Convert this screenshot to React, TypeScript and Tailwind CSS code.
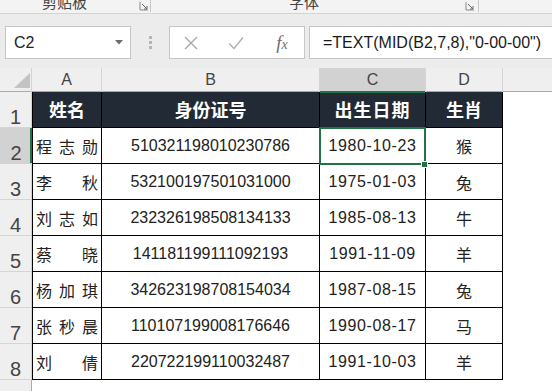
import React from "react";

const rows = [
  ["程志勋", "510321198010230786", "1980-10-23", "猴"],
  ["李秋", "532100197501031000", "1975-01-03", "兔"],
  ["刘志如", "232326198508134133", "1985-08-13", "牛"],
  ["蔡晓", "141181199111092193", "1991-11-09", "羊"],
  ["杨加琪", "342623198708154034", "1987-08-15", "兔"],
  ["张秒晨", "110107199008176646", "1990-08-17", "马"],
  ["刘倩", "220722199110032487", "1991-10-03", "羊"],
];

const cols = "grid grid-cols-[32px_70px_218px_106px_77px_1fr]";

function Launcher() {
  return (
    <svg width="10" height="10" viewBox="0 0 10 10" className="block">
      <path d="M1 1 V9 H9" fill="none" stroke="#8a8a8a" strokeWidth="1" />
      <path d="M3 3 L8 8 M8 5 V8 H5" fill="none" stroke="#6a6a6a" strokeWidth="1" />
    </svg>
  );
}

export default function App() {
  return (
    <div className="w-[552px] h-[391px] overflow-hidden bg-white font-['Liberation_Sans','Noto_Sans_CJK_SC',sans-serif] text-[#222]">
      {/* ribbon bottom strip */}
      <div className="h-[14px] bg-[#f3f3f3] border-b border-[#d4d4d4] relative overflow-hidden">
        <span className="absolute left-[42px] top-[-6px] text-[15px] leading-none text-[#444] font-['Noto_Sans_CJK_SC',sans-serif]">剪贴板</span>
        <div className="absolute left-[139px] top-[1px]"><Launcher /></div>
        <div className="absolute left-[150px] top-0 h-[12px] w-px bg-[#c8c8c8]" />
        <span className="absolute left-[289px] top-[-6px] text-[15px] leading-none text-[#444] font-['Noto_Sans_CJK_SC',sans-serif]">字体</span>
        <div className="absolute left-[465px] top-[1px]"><Launcher /></div>
        <div className="absolute left-[478px] top-0 h-[12px] w-px bg-[#c8c8c8]" />
      </div>

      {/* formula bar */}
      <div className="h-[54px] bg-[#ececec] flex items-start pt-[12px] pl-[5px]">
        <div className="w-[126px] h-[33px] bg-white border border-[#c6c6c6] flex items-center pl-[8px] pr-[7px] justify-between">
          <span className="text-[16px] text-[#222]">C2</span>
          <svg width="8" height="5" viewBox="0 0 8 5"><path d="M0 0 H8 L4 4.5 Z" fill="#6b6b6b" /></svg>
        </div>
        <div className="w-[38px] h-[33px] flex flex-col items-center justify-center gap-[2px]">
          <div className="w-[3px] h-[3px] bg-[#b5b5b5]" />
          <div className="w-[3px] h-[3px] bg-[#b5b5b5]" />
          <div className="w-[3px] h-[3px] bg-[#b5b5b5]" />
        </div>
        <div className="w-[136px] h-[33px] bg-white border border-[#c6c6c6] flex items-center">
          <div className="w-[42px] flex justify-center">
            <svg width="14" height="14" viewBox="0 0 14 14"><path d="M1 1 L13 13 M13 1 L1 13" stroke="#a8a8a8" strokeWidth="1.4" /></svg>
          </div>
          <div className="w-[48px] flex justify-center">
            <svg width="16" height="14" viewBox="0 0 16 14"><path d="M1 7.5 L6 12.5 L15 1.5" fill="none" stroke="#b0b0b0" strokeWidth="1.5" /></svg>
          </div>
          <div className="w-[44px] flex justify-center">
            <span className="font-['Liberation_Serif',serif] italic text-[#707070] text-[19px] leading-none">f<span className="text-[14px]">x</span></span>
          </div>
        </div>
        <div className="ml-[4px] flex-1 mr-[-3px] h-[33px] bg-white border border-[#c6c6c6] flex items-center pl-[13px]">
          <span className="text-[16px] text-[#1a1a1a] whitespace-nowrap">=TEXT(MID(B2,7,8),"0-00-00")</span>
        </div>
      </div>

      {/* column headers */}
      <div className={`${cols} h-[24px] bg-[#efefef] border-b border-[#ababab] text-[16px] text-[#444]`}>
        <div className="border-r border-[#d4d4d4] relative">
          <svg width="16" height="15" viewBox="0 0 16 15" className="absolute left-[14px] top-[5px]"><path d="M16 0 V15 H0 Z" fill="#c3c3c3" /></svg>
        </div>
        <div className="border-r border-[#d4d4d4] flex items-center justify-center">A</div>
        <div className="border-r border-[#d4d4d4] flex items-center justify-center">B</div>
        <div className="border-r border-[#d4d4d4] bg-[#d2d2d2] flex items-center justify-center relative">
          C
          <div className="absolute left-0 right-0 bottom-[-1px] h-[2px] bg-[#217346]" />
        </div>
        <div className="border-r border-[#d4d4d4] flex items-center justify-center">D</div>
        <div />
      </div>

      {/* row 1 */}
      <div className={`${cols} h-[36px]`}>
        <RowHead n={1} />
        <div className="bg-[#222b35] border-l border-r border-b border-black flex items-center justify-center text-white text-[18px] font-bold font-['Noto_Sans_CJK_SC',sans-serif]">姓名</div>
        <div className="bg-[#222b35] border-r border-b border-black flex items-center justify-center text-white text-[18px] font-bold font-['Noto_Sans_CJK_SC',sans-serif]">身份证号</div>
        <div className="bg-[#222b35] border-r border-b border-black flex items-center justify-center text-white text-[18px] font-bold font-['Noto_Sans_CJK_SC',sans-serif] tracking-[1px]">出生日期</div>
        <div className="bg-[#222b35] border-r border-b border-black flex items-center justify-center text-white text-[18px] font-bold font-['Noto_Sans_CJK_SC',sans-serif]">生肖</div>
        <div />
      </div>

      {rows.map((r, i) => {
        const sel = i === 0;
        const name = r[0].split("");
        return (
          <div key={i} className={`${cols} h-[36px]`}>
            <RowHead n={i + 2} selected={sel} />
            <div className="border-l border-r border-b border-black flex items-center justify-between px-[3px] text-[16px] font-['Noto_Sans_CJK_SC',sans-serif]">
              {name.map((c, j) => (
                <span key={j}>{c}</span>
              ))}
            </div>
            <div className="border-r border-b border-black flex items-center justify-center text-[16px]">{r[1]}</div>
            <div className="border-r border-b border-black flex items-center justify-center text-[16px] tracking-[0.6px] relative">
              {r[2]}
              {sel && (
                <>
                  <div className="absolute left-[-1px] top-[-1px] w-[107px] h-[38px] border-2 border-[#217346] z-10" />
                  <div className="absolute left-[102px] top-[34px] w-[5px] h-[5px] bg-[#217346] z-20 outline outline-1 outline-white" />
                </>
              )}
            </div>
            <div className="border-r border-b border-black flex items-center justify-center text-[16px] font-['Noto_Sans_CJK_SC',sans-serif]">{r[3]}</div>
            <div />
          </div>
        );
      })}

      {/* row 9 partial */}
      <div className={`${cols} h-[20px]`}>
        <div className="bg-[#efefef] border-r border-[#ababab]" />
        <div />
      </div>
    </div>
  );
}

function RowHead({ n, selected }: { n: number; selected?: boolean }) {
  return (
    <div
      className={`${selected ? "bg-[#d2d2d2] shadow-[inset_-2px_0_0_#217346]" : "bg-[#efefef] border-r border-[#ababab]"} border-b border-[#d4d4d4] flex items-end justify-center text-[20px] leading-none text-[#444]`}
    >
      <span>{n}</span>
    </div>
  );
}
